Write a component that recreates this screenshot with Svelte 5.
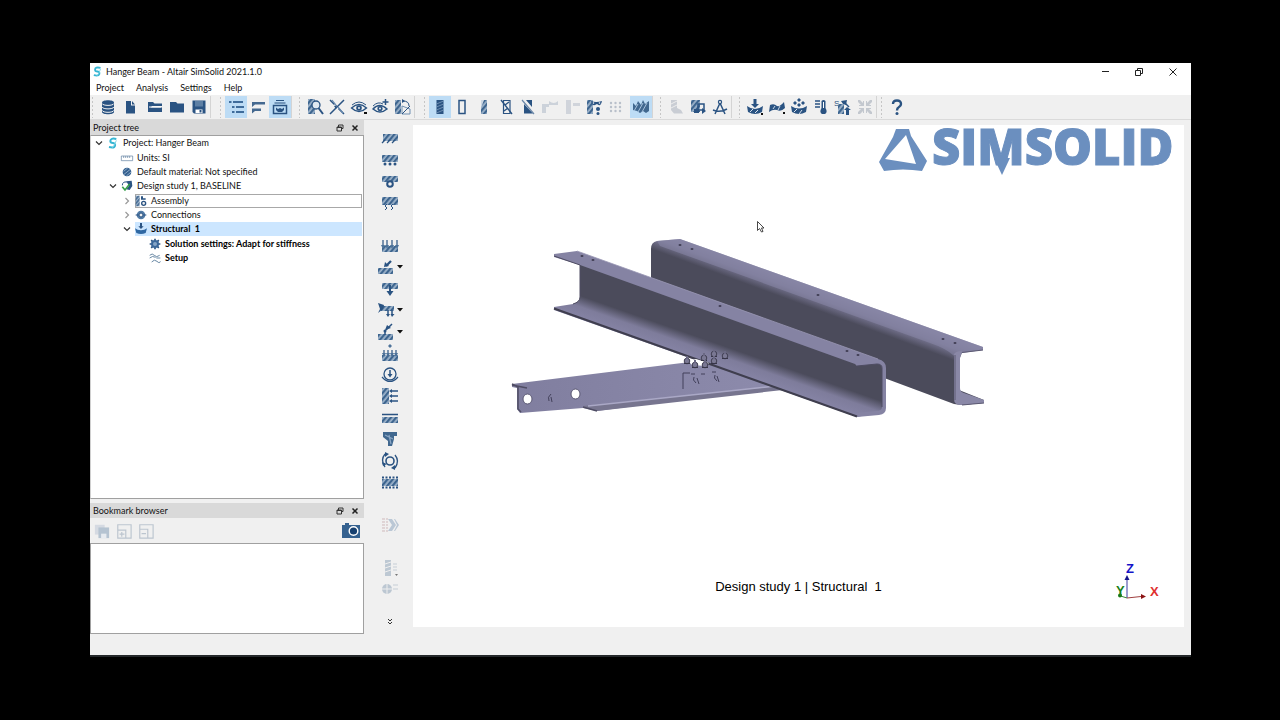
<script>
  const D = '#2a5382';
  const hatch = (x, y, w, h) => `<rect x="${x}" y="${y}" width="${w}" height="${h}" fill="url(#hatch)"/>`;
  const line = (d, w = 1.5, c = D) => `<path d="${d}" fill="none" stroke="${c}" stroke-width="${w}"/>`;
  const fill = (d, c = D) => `<path d="${d}" fill="${c}"/>`;
  const dot = (x, y, r, c = D) => `<circle cx="${x}" cy="${y}" r="${r}" fill="${c}"/>`;
  const ring = (x, y, r, w = 1.5) => `<circle cx="${x}" cy="${y}" r="${r}" fill="#f0f0f0" stroke="${D}" stroke-width="${w}"/>`;

  // Glyphs on an 18 x 18 grid
  const glyphs = {
    database: fill('M3 4.5C3 1.5 15 1.5 15 4.5V14C15 17 3 17 3 14Z') + line('M3 5.5C4 8 14 8 15 5.5M3 9C4 11.500 14 11.500 15 9M3 12.300C4 15 14 15 15 12.300', 1, '#f0f0f0'),
    file: fill('M5 3H10V7.500H14V15.500H5ZM11 3L14 6.500H11Z'),
    open: fill('M2 4H7L8.500 5.500H16V8H6L2 13Z') + fill('M2 14V9.500H16V14Z') + line('M3 9H15', 1, '#fff'),
    folder: fill('M2 4H8L9.500 5.500H16V14.500H2Z'),
    save: fill('M2.500 2.500H15.500V15.500H4L2.500 14Z') + fill('M5 3H13V8.500H5Z', '#5d7fa4') + fill('M5.500 11.500H12.500V15H5.500Z', '#fff') + fill('M9.500 12H11.500V14.500H9.500Z'),
    list: fill('M2 3H4.500V5H2ZM6 3H16V5H6ZM5 8H7.500V10H5ZM9 8H17V10H9ZM5 13H7.500V15H5ZM9 13H17V15H9Z', '#3f6c9b'),
    rows: fill('M3 4H16V6.500H6L3 9ZM3 10.500H12V13H6L3 15.500Z', '#44688f'),
    archive: line('M5 2.500H13M3.500 5H14.500', 1.200) + line('M2.500 7.500H15.500V15.500H2.500Z', 1.500) + fill('M5 9.500L7 11L9 10L11 11L13 9.500V12L11 14H7L5 12Z'),
    inspect: hatch(2, 1, 7, 15) + `<circle cx="10" cy="7" r="4" fill="#dfe8f1" stroke="${D}" stroke-width="1.300"/>` + line('M12.500 10L17 16', 2),
    explode: line('M2 16L16 2M2 2L6.500 6.500M10.500 10.500L16 16', 1.500) + line('M4 2L8 7M10 9L15 15', 1.200, '#6688ad') + fill('M6 8L9 7L8 11Z'),
    eye: line('M1.500 10Q9 3 16.500 10Q9 17 1.500 10Z', 1.400) + line('M2 7Q9 1 16 7', 1) + dot(9, 10, 2.800) + dot(9, 10, .9, '#fff') + fill('M14 14H17V16H14Z', '#111'),
    eyePlus: line('M1 11Q7.500 4 15 11Q8 17 1 11Z', 1.400) + line('M1 8Q6 3 11 6', 1) + dot(8, 10.500, 2.600) + dot(8, 10.500, .9, '#fff') + line('M13.500 1V7M10.500 4H16.500', 1.500),
    transform: hatch(1, 2, 6, 14) + line('M8 8L16 11V16H8Z', 1, '#6f8fb1') + line('M8 16L16 8M9 3Q15 3 15 8', 1) + fill('M8 1L11 3L8 5Z'),
    solid: `<rect x="5.500" y="2" width="7" height="14" fill="${D}"/>` + line('M5.500 6L12.500 3M5.500 9L12.500 6M5.500 12L12.500 9M5.500 15L12.500 12', .8, '#7f9dbe'),
    outline: line('M6 2.500H12V15.500H6Z', 1.500),
    partial: hatch(6, 2, 6, 14) + fill('M6 2H9L6 10Z', '#cdd8e4'),
    crossed: line('M6.500 2.500H13V15.500H6.500Z', 1.200) + line('M4 2L15 16M8 7L12 4M7 13L11 10', 1.400),
    halfCut: fill('M5 6L14 15.500H5ZM7 2H13V9Z') + line('M3 2L15 16', 1.200, '#6b87a8'),
    ghostA: fill('M1 6H8V9H5V15H1ZM8 3Q13 7 17 3V7H8Z', '#ccd2da'),
    ghostB: fill('M3 2H8V16H3ZM10 5H17V8H10Z', '#d0d4db'),
    mask: hatch(2, 2, 6, 14) + fill('M6 3Q11 5 17 3Q16 8 13.500 7L12 6L10 7Q7 8 6 3Z') + dot(13, 11, 2) + dot(13, 15.500, 1.500) + dot(8.500, 5, .8, '#fff') + dot(14.500, 5, .8, '#fff'),
    grid: [4, 8.500, 13].map((x) => [5, 9, 13].map((y) => dot(x, y, 1.200, '#b9c0ca')).join('')).join(''),
    wave: fill('M1 5L4 8L6 3L9 7L11 2L13 6L17 3V13L14 15L11 13L8 15L5 13L1 12Z', '#41688f') + line('M2 13L6 6M6 14L11 5M10 14L15 5', 1, '#a8c2dd'),
    ghostC: fill('M4 2H10V10L14 12L16 15.500H7L4 12Z', '#c9cdd4') + line('M4 6L10 3M4 10L10 7', 1, '#eee'),
    callout: hatch(2, 2, 9, 12) + line('M9 6H15V12H9Z', 1.500) + fill('M13 10L17 13L13 16Z') + fill('M5 11H10V15H5Z'),
    compass: line('M9 5L4 16M9 5L14 16M2 12Q9 15 16 11', 1.500) + ring(9, 4, 1.600, 1.200),
    loadDown: fill('M7.500 1H10.500V6H13L9 10L5 6H7.500Z') + fill('M1 8Q5 11 9 11Q13 11 17 8L16 14Q9 18 2 14Z') + line('M4 14L7 11M9 15L12 12', 1, '#d8e2ed') + fill('M15 15H17V17H15Z', '#111'),
    curve: fill('M1 14L2 7Q6 5 9 8Q12 9 16 4L17 10Q13 14 9 12Q5 11 1 14Z') + line('M5 11L7 8M10 12L12 8', 1, '#ccd9e6') + fill('M15 14H17V16H15Z', '#111'),
    thermal: fill('M9 0L11 2L9 4L7 2ZM5 3L7 5L5 7L3 5ZM13 3L15 5L13 7L11 5ZM9 5L11 7L9 9L7 7Z') + fill('M1 8Q9 13 17 8L16 14Q9 18 2 14Z') + line('M4 14L7 11M9 16L12 12', 1, '#d8e2ed'),
    thermometer: fill('M9.500 3Q11.500 1 13.500 3V10Q16 14 13 16H10Q7 14 9.500 10Z') + line('M3 3H8M3 6H8M3 9H8', 1.300) + line('M11.500 4V10', 1, '#fff'),
    dynamics: `<text x="0" y="8" font-size="8" font-family="Liberation Sans, sans-serif" fill="${D}">S</text>` + hatch(4, 6, 6, 10) + fill('M7 3L13 2L12 7L9 6ZM13 9L17 12H15V17H12V12H10Z') + line('M11 5L15 9', 1.500),
    collapse: fill('M2 2L4 2L7 5V3H8V8H3V7H5L2 4ZM16 2V4L13 7H15V8H10V3H11V5L14 2ZM2 16V14L5 11H3V10H8V15H7V13L4 16ZM16 16H14L11 13V15H10V10H15V11H13L16 14Z', '#c3c8cf'),
    help: line('M5 6Q5 2.500 9 2.500Q13 2.500 13 6Q13 8 11 9Q9 10 9 12.500', 2.400) + dot(9, 15.500, 1.500),

    fixed: hatch(2, 4, 15, 7) + line('M1 13L4 10M6 13L9 10M11 13L14 10', 1.300),
    slider: hatch(1, 4, 16, 7) + dot(4, 13, 1.500) + dot(9, 13, 1.500) + dot(14, 13, 1.500),
    hinge: hatch(1, 3, 16, 6) + ring(9, 11, 2.800, 2),
    spring: hatch(1, 3, 16, 8) + line('M6 10L4 12L6 14L4 16M12 10L10 12L12 14L10 16', 1),
    pressure: hatch(1, 9, 16, 6) + line('M2 3V10M6 3V10M11 3V10M16 3V10', 1.200) + fill('M0 8H4L2 12ZM4 8H8L6 12ZM9 8H13L11 12ZM14 8H18L16 12Z', '#4d7299'),
    force: hatch(1, 10, 15, 6) + line('M14 3L9 8', 2.300) + fill('M7 9L8 4L12 8Z'),
    gravity: hatch(1, 3, 16, 6) + line('M9 5V12', 2) + fill('M5.500 11H12.500L9 16Z'),
    bearing: hatch(4, 5, 13, 5) + fill('M1 2L7 4L6 8L1 12L3 8Z') + line('M11 9V14M15 9V14', 1.500) + fill('M9 13H13L11 16ZM13.500 13H17.500L15 16Z'),
    remote: hatch(1, 11, 15, 6) + line('M15 1L9 7M8 7V12', 1.500) + fill('M8 7L10 2L14 5Z') + dot(8, 8, 1.500),
    thermalLoad: hatch(1, 11, 16, 6) + line('M3 6V12M7 6V12M11 6V12M15 6V12', 1.200) + fill('M9 0L11 2L9 4L7 2ZM1 9H5L3 13ZM5 9H9L7 13ZM9 9H13L11 13ZM13 9H17L15 13Z', '#4d7299'),
    inertia: ring(9, 8, 6, 1.300) + line('M1 11Q9 20 17 11', 1.200) + line('M9 4V9', 1.500) + fill('M6.500 8H11.500L9 11.500Z'),
    hydro: hatch(1, 1, 7, 16) + line('M10 4H17M10 9H17M10 14H17', 1.500) + fill('M8 4L11 2V6ZM8 9L11 7V11ZM8 14L11 12V16Z'),
    surface: hatch(1, 8, 16, 6) + line('M1 5.500H17', 1.500),
    bolt: fill('M2 2H16V6H13V9L11 16H7V11L2 7Z', '#41688f') + line('M4 5L12 9M8 5L10 14', 1.200, '#8ba7c5'),
    rotate: ring(9, 9, 4, 1.600) + line('M4 2Q-1 8 4 15M14 3Q19 9 14 16', 1.300) + fill('M4 0L8 2L4 5ZM14 13L10 16L14 18ZM1 10L6 12L2 14Z'),
    strip: hatch(1, 6, 16, 7) + `<path d="M1 4.500H17M1 14.500H17" stroke="#2a5382" stroke-width="2" stroke-dasharray="2 1.500"/>`,
    stream: fill('M7 3H11L15 9L11 15H7L11 9ZM13 3H14L18 9L14 15H13L16 9Z', '#bac7d5') + `<path d="M1 3H7M1 6H7M1 9H7M1 12H7M1 15H7" stroke="#cfb9bb" stroke-dasharray="3 1"/>`,
    legendBar: fill('M4 1H10V17H4Z', '#bdc8d3') + line('M4 5L10 3M4 9L10 7M4 13L10 11', 1, '#eee') + line('M12 5H16M12 8H16M12 11H16', 1.200, '#c5cdd6') + fill('M14 15H17L15.500 17Z', '#777'),
    legendGlobe: `<circle cx="6" cy="9" r="5" fill="#bcc7d2"/>` + line('M6 4V14M1 9H11', 1, '#eee') + line('M12 5H17M12 9H17', 1.200, '#c5cdd6'),

    brand: line('M14 3Q5 1 5 6Q5 9 9 9Q13 10 12 13Q11 17 3 15', 3, '#35b5d3') + line('M14 5Q12 12 8 16', 1.500, '#87d8e8'),
    ruler: `<path d="M.5 6H17.500V13H.5Z" fill="#fff" stroke="#5c7c9e"/>` + line('M4 6V9M7 6V9M10 6V9M13 6V9', 1, '#5c7c9e'),
    material: dot(9, 9, 6.500, '#34608f') + line('M4 8L10 3M4 13L14 5M8 15L15 9', 1.200, '#a5bdd6'),
    study: fill('M8 2L16 1L17 9L13 15L8 14L12 9Z') + line('M9 3Q2 2 2 8', 1.500) + line('M2 10L6 15L13 6', 2.500, '#35a04a'),
    parts: hatch(1, 1, 6, 16) + fill('M9 2H12V5H16V7H9Z') + ring(13, 12.500, 3, 2),
    connection: dot(9, 9, 6.500, '#527ba6') + ring(9, 9, 3) + line('M1 9H5M13 9H17', 1.500),
    structural: fill('M7.500 0H10.500V5H13L9 9L5 5H7.500Z') + fill('M0 8L4 10L9 11L14 10L18 8L16 15Q9 18 2 15Z', '#2f68a3'),
    gear: `<path d="M9 1V17M1 9H17M3.300 3.300L14.700 14.700M14.700 3.300L3.300 14.700" stroke="#2a5382" stroke-width="2.500"/>` + dot(9, 9, 6, '#3c689a') + dot(9, 9, 3, '#86a5c6'),
    setup: line('M1 5Q5 1 8 5T16 5M1 9Q5 5 10 8M4 15Q8 10 12 14T17 14M11 9H17', 1.300, '#527697'),
    copies: fill('M1 2H12V13H1Z', '#d5dae2') + fill('M5 5H17V17H5Z', '#b5c3d1') + fill('M8 12H14V17H8Z', '#e7ebf0'),
    expand: line('M2 2H17V17H2ZM2 8H11V17M6.500 10V15.500M4 12.500H9.500', 1.300, '#bcc5cf'),
    shrink: line('M2 2H17V17H2ZM2 7H11V17M4 12H9', 1.300, '#bcc5cf'),
    camera: fill('M0 3H3V1H7V3H18V16H0Z', '#35618f') + `<circle cx="11.500" cy="9" r="4.300" fill="#17406f" stroke="#fff" stroke-width="1.400"/>`
  };

  const groups = [
    { items: [['database', 'Database'], ['file', 'New project'], ['open', 'Open project'], ['folder', 'Close project'], ['save', 'Save project']], gapAt: 2 },
    { items: [['list', 'Project tree', 1], ['rows', 'Comments'], ['archive', 'Bookmark browser', 1]], tight: true },
    { items: [['inspect', 'Inspect'], ['explode', 'Explode'], ['eye', 'Show'], ['eyePlus', 'Show more'], ['transform', 'Transform']] },
    { items: [['solid', 'Solid', 1], ['outline', 'Outline'], ['partial', 'Transparent'], ['crossed', 'Hide'], ['halfCut', 'Clip'], ['ghostA', 'Mask'], ['ghostB', 'Unmask'], ['mask', 'Mask settings'], ['grid', 'Points'], ['wave', 'Loads and constraints', 1]], gapAt: 9, tight: true },
    { items: [['ghostC', 'Results'], ['callout', 'Pick info'], ['compass', 'Measure']], tight: true },
    { items: [['loadDown', 'Structural'], ['curve', 'Modal'], ['thermal', 'Thermal'], ['thermometer', 'Temperature'], ['dynamics', 'Dynamics'], ['collapse', 'Fit']], tight: true },
    { items: [['help', 'Help']], last: true }
  ];

  const side = [
    ['fixed', 'Immovable'], ['slider', 'Slider'], ['hinge', 'Hinge'], ['spring', 'Spring'], null,
    ['pressure', 'Pressure'], ['force', 'Force', 1], ['gravity', 'Gravity'], ['bearing', 'Bearing load', 1], ['remote', 'Remote load', 1],
    ['thermalLoad', 'Thermal load'], ['inertia', 'Inertia load'], ['hydro', 'Hydrostatic pressure'], ['surface', 'Surface load'], ['bolt', 'Bolt tightening'],
    ['rotate', 'Angular velocity'], ['strip', 'Distributed mass'], null, ['stream', 'Solve'], null, ['legendBar', 'Results plot'], ['legendGlobe', 'Reactions']
  ];

  const tree = [{ icon: 'brand', label: 'Project: Hanger Beam', open: true, children: [
    { icon: 'ruler', label: 'Units: SI' },
    { icon: 'material', label: 'Default material: Not specified' },
    { icon: 'study', label: 'Design study 1, BASELINE', open: true, children: [
      { icon: 'parts', label: 'Assembly', open: false, focus: true },
      { icon: 'connection', label: 'Connections', open: false },
      { icon: 'structural', label: 'Structural  1', open: true, selected: true, bold: true, children: [
        { icon: 'gear', label: 'Solution settings: Adapt for stiffness', bold: true },
        { icon: 'setup', label: 'Setup', bold: true }
      ] }
    ] }
  ] }];

  const bolts = [[687, 361], [695, 365], [704, 358], [705, 365], [714, 354], [714, 361], [725, 356]];
  const holes = [[582, 256], [593, 260], [720, 306], [847, 351], [858, 355], [680, 245], [692, 249], [818, 295], [943, 339], [955, 343]];
</script>

{#snippet icon(name)}
  <svg class="icon" viewBox="0 0 18 18" aria-hidden="true">{@html glyphs[name]}</svg>
{/snippet}

{#snippet branch(nodes)}
  <ul>
    {#each nodes as n}
      <li>
        <div class="row">
          {#if n.open !== undefined}
            <button class="twisty" aria-label={(n.open ? 'Collapse ' : 'Expand ') + n.label}>
              <svg viewBox="0 0 8 8" aria-hidden="true"><path d={n.open ? 'M1 2.500L4 5.500L7 2.500' : 'M2.500 1L5.500 4L2.500 7'} fill="none" stroke={n.open ? '#333' : '#999'} stroke-width="1.200" /></svg>
            </button>
          {:else}
            <span class="twisty"></span>
          {/if}
          <button class="node" class:bold={n.bold} class:selected={n.selected} class:focus={n.focus}>{@render icon(n.icon)}<span>{n.label}</span></button>
        </div>
        {#if n.children}{@render branch(n.children)}{/if}
      </li>
    {/each}
  </ul>
{/snippet}

{#snippet dockTitle(text)}
  <header class="dock-title">
    <h2>{text}</h2>
    <button aria-label="Float {text}"><svg viewBox="0 0 8 8"><path d="M2.500 3V1H7V4.500H5.500M1 3H5.500V7H1ZM1 3.500H5.500" fill="none" stroke="#333" /></svg></button>
    <button aria-label="Close {text}"><svg viewBox="0 0 8 8"><path d="M1.500 1.500L6.500 6.500M6.500 1.500L1.500 6.500" stroke="#222" stroke-width="1.500" /></svg></button>
  </header>
{/snippet}

<svg class="defs" aria-hidden="true">
  <defs>
    <pattern id="hatch" width="4" height="4" patternUnits="userSpaceOnUse" patternTransform="rotate(40)">
      <rect width="4" height="4" fill="#9db3ca" /><rect width="2.200" height="4" fill="#3d658f" />
    </pattern>
  </defs>
</svg>

<div class="screen">
  <div class="window">
    <header class="titlebar">
      {@render icon('brand')}
      <h1>Hanger Beam - Altair SimSolid 2021.1.0</h1>
      <button aria-label="Minimize"><svg viewBox="0 0 10 10"><path d="M2 4.500H9" stroke="#222" /></svg></button>
      <button aria-label="Restore"><svg viewBox="0 0 10 10"><path d="M3.500 3V1.500H8.500V6.500H7M1.500 3.500H6.500V8.500H1.500Z" fill="none" stroke="#222" /></svg></button>
      <button aria-label="Close"><svg viewBox="0 0 10 10"><path d="M1.500 1.500L8.500 8.500M8.500 1.500L1.500 8.500" stroke="#222" /></svg></button>
    </header>
    <nav class="menu">
      {#each ['Project', 'Analysis', 'Settings', 'Help'] as m}<button>{m}</button>{/each}
    </nav>
    <div class="toolbar" role="toolbar" aria-label="Main">
      {#each groups as g, i}
        <div class="group" class:tight={g.tight} class:first={i === 0} class:last={g.last}>
          {#each g.items as [name, label, on], j}
            <button class="tool" class:on class:spaced={g.gapAt === j} aria-label={label}>{@render icon(name)}</button>
          {/each}
        </div>
      {/each}
    </div>

    <div class="main">
      <aside class="docks">
        <section class="dock tree-dock">
          {@render dockTitle('Project tree')}
          <div class="tree">{@render branch(tree)}</div>
        </section>
        <section class="dock">
          {@render dockTitle('Bookmark browser')}
          <div class="bookmark-tools">
            <button aria-label="Update bookmark">{@render icon('copies')}</button>
            <button aria-label="Expand all">{@render icon('expand')}</button>
            <button aria-label="Collapse all">{@render icon('shrink')}</button>
            <button class="camera" aria-label="Add bookmark">{@render icon('camera')}</button>
          </div>
          <div class="bookmarks"></div>
        </section>
      </aside>

      <div class="sidebar" role="toolbar" aria-label="Analysis">
        <div class="slots">
          {#each side as s}
            {#if s}
              <button class="slot" aria-label={s[1]}>
                {@render icon(s[0])}
                {#if s[2]}<svg class="drop" viewBox="0 0 6 4" aria-hidden="true"><path d="M0 0H6L3 3.500Z" fill="#111" /></svg>{/if}
              </button>
            {:else}<span></span>{/if}
          {/each}
        </div>
        <button class="more" aria-label="More tools"><svg viewBox="0 0 6 8"><path d="M1 1L3 3L5 1M1 4L3 6L5 4" fill="none" stroke="#333" /></svg></button>
      </div>

      <main class="view">
        <svg class="model" viewBox="413 125 771 502" role="img" aria-label="Hanger beam assembly">
          <defs>
            <linearGradient id="back" gradientUnits="userSpaceOnUse" x1="740" y1="260" x2="733" y2="279">
              <stop offset="0" stop-color="#8886a6" /><stop offset=".45" stop-color="#7b7997" /><stop offset="1" stop-color="#4b4b5b" />
            </linearGradient>
            <linearGradient id="web" gradientUnits="userSpaceOnUse" x1="740" y1="374" x2="747" y2="354">
              <stop offset="0" stop-color="#8583a4" /><stop offset=".5" stop-color="#7e7c9b" /><stop offset="1" stop-color="#4b4b5b" />
            </linearGradient>
            <linearGradient id="plate" x1="0" x2="1"><stop stop-color="#807e9f" /><stop offset="1" stop-color="#8d8bac" /></linearGradient>
          </defs>

          <path d="M651 249Q651 242 657 241L680 239L983 347V350L962 353L959 360V390L984 400V403L961 405L954 404L651 291Z" fill="url(#back)" />
          <path d="M680 239L983 347V350L962 352Q957 353 957 358L953 355Q945 348 930 343L660 246L657 241Z" fill="#8785a5" opacity=".6" />
          <path d="M954 354Q956 351 962 351L960 358V388Q960 392 964 393L984 400V403L961 405Q954 405 954 399Z" fill="#8a88a7" />
          <path d="M955 355V400M962 352.500L983 350M962 405L984 403" fill="none" stroke="#5c5a73" />

          <path d="M512 384L690 362L720 366L781 387L597 411L583 408L520 413L517 409V388L512 387Z" fill="url(#plate)" />
          <path d="M583 406L781 386L783 390L597 411Z" fill="#77758f" />
          <path d="M588 406L780 385.500" fill="none" stroke="#aaa8c6" stroke-width="1.500" />
          <path d="M512 384L518 387V409L521 412M512 385L527 388M583 407L597 411" fill="none" stroke="#4f4d64" stroke-width="1.500" />
          <path d="M683 389V373H690" fill="none" stroke="#42405a" />
          <path d="M551 394Q547 397 549 401M551 397L552 402M691 374H695M701 374H705M712 372H716M694 377Q692 380 696 383M697 378L699 384M715 375Q713 378 717 381M717 376L719 382" fill="none" stroke="#42405a" />
          <ellipse cx="527.500" cy="399" rx="4.500" ry="5" fill="#fff" stroke="#5b5974" />
          <ellipse cx="575.500" cy="394" rx="4.500" ry="5" fill="#fff" stroke="#5b5974" />

          <path d="M580 263L857 363L882 361L884 411L857 417L554 310V307L573 304Q580 302 580 297Z" fill="url(#web)" />
          <path d="M554 254L577 251L878 359Q886 361 886 368V408Q886 414 879 415L857 417L855 413L876 411Q882 411 882 407V369Q882 364 877 364L857 366L855 364L580 265L554 257Z" fill="#8583a3" />
          <path d="M554 256L580 265V297Q580 302 573 304M857 366L877 364Q882 364 882 368V407" fill="none" stroke="#4e4c62" stroke-width="1" />
          <path d="M554 308.500L857 416.500" fill="none" stroke="#3f3e4e" stroke-width="2" />
          <path d="M577 251L878 359" fill="none" stroke="#9a98b5" stroke-width=".8" />

          <path d="M688 361L696 359L709 363L705 366L692 365Z" fill="#fff" />
          {#each bolts as [x, y]}
            <g transform="translate({x} {y})"><circle r="2.800" fill="#7a7893" stroke="#403e52" /><path d="M-3 2.500H3" stroke="#373548" /><path d="M0 -5V-2" stroke="#6a6883" stroke-width="2" /></g>
          {/each}
          {#each holes as [x, y]}<ellipse cx={x} cy={y} rx="1.500" ry="1.100" fill="#3f3d52" />{/each}
          <path d="M757.500 221.500V230.500L759.500 228.500L761.500 232L763 231.500L761.500 228H764Z" fill="#fff" stroke="#333" stroke-width=".9" />
        </svg>

        <svg class="logo" viewBox="0 0 300 48" role="img" aria-label="SimSolid">
          <path fill="#6b8fbf" fill-rule="evenodd" d="M18 1H31L33 8L49 33L44 43Q25 40 6 43L1 34L15 9ZM28 7L7 31L38 36Z" />
          <text x="54" y="37" font-family="Open Sans, sans-serif" font-weight="800" font-size="49" fill="#6b8fbf" stroke="#6b8fbf" stroke-width="1">SIMSOLID</text>
          <path d="M116 30H132L124 47Z" fill="#6b8fbf" />
        </svg>

        <p class="caption">Design study 1 | Structural  1</p>

        <svg class="triad" viewBox="0 0 50 44" role="img" aria-label="Axes">
          <path d="M14 37V18" stroke="#3a3aa0" /><path d="M11.500 19L14 14L16.500 19Z" fill="#14148c" />
          <path d="M14 37L28 35.500" stroke="#a04040" /><path d="M28 33L33 35.500L28 38Z" fill="#8c1414" />
          <path d="M14 37L6 34.500" stroke="#3a8a3a" /><circle cx="7" cy="34.500" r="2" fill="#187818" />
          <text x="13" y="12" fill="#1414c8">Z</text><text x="3" y="34" fill="#188018">Y</text><text x="37" y="35" fill="#e03030">X</text>
        </svg>
      </main>
    </div>
    <footer class="status"></footer>
  </div>
</div>

<style>
  :global(body) { margin: 0; background: #000; }
  * { box-sizing: border-box; }
  button { margin: 0; padding: 0; border: 0; background: none; font: inherit; color: inherit; }
  h1, h2, p { margin: 0; font-size: inherit; font-weight: 400; }
  svg { display: block; flex: none; overflow: visible; }
  .defs { position: absolute; width: 0; height: 0; }
  .icon { width: 18px; height: 18px; }

  .screen { display: flex; min-height: 100vh; padding: 63px 89px 63px 90px; background: #000; }
  .window { flex: 1; min-width: 0; display: flex; flex-direction: column; background: #f0f0f0; color: #111; font: 9px/14px Lato, "Noto Sans", sans-serif; border-bottom: 2px solid #24282a; }

  .titlebar { display: flex; align-items: center; height: 17px; padding-left: 2px; background: #fff; }
  .titlebar > .icon { width: 11px; height: 11px; margin-right: 3px; }
  .titlebar h1 { flex: 1; }
  .titlebar button { display: grid; place-items: center; width: 34px; height: 17px; }
  .titlebar button:last-child { margin-right: 1px; }
  .titlebar button svg { width: 10px; height: 10px; }

  .menu { display: flex; gap: 12px; height: 15px; padding-left: 6px; background: #fff; }

  .toolbar { display: flex; align-items: center; height: 25px; border-bottom: 1px solid #dadada; }
  .group { display: flex; padding-left: 10px; margin-right: 4px; border-right: 1px solid #d4d4d4; background: radial-gradient(circle, #c6c6c6 1px, transparent 1px) 4px 0 / 3px 4px repeat-y; }
  .group.first { padding-left: 7px; background-position-x: 1px; }
  .group.tight { margin-right: 2px; }
  .group.last { padding-left: 7px; border: 0; background-position-x: 1px; }
  .tool { display: grid; place-items: center; width: 22px; height: 22px; }
  .tool.spaced { margin-left: 3px; }
  .tool.on { background: #bddcf5; }

  .main { flex: 1; min-height: 0; display: grid; grid-template-columns: 274px 48px minmax(0, 1fr); }
  .docks { display: flex; flex-direction: column; gap: 4px; }
  .dock { display: flex; flex-direction: column; }
  .tree-dock { flex: 1; }
  .dock-title { display: flex; align-items: center; height: 15px; padding-left: 3px; background: #d9d9d9; }
  .dock-title h2 { flex: 1; }
  .dock-title button { display: grid; place-items: center; width: 15px; height: 15px; }
  .dock-title button:last-child { margin-right: 2px; }
  .dock-title svg { width: 8px; height: 8px; }
  .tree { flex: 1; padding-right: 1px; background: #fff; border: 1px solid #a0a0a0; border-left-color: #d0d0d0; }
  .tree ul { margin: 0; padding: 0; list-style: none; }
  .tree ul ul { padding: 1px 0 0 14px; }
  .row { display: flex; height: 14px; }
  .twisty { flex: none; display: grid; place-items: center; width: 16px; }
  .twisty svg { width: 8px; height: 8px; }
  .node { flex: 1; display: flex; align-items: center; gap: 4px; height: 14px; line-height: 14px; white-space: pre; text-align: left; }
  .node .icon { width: 12px; height: 12px; }
  .node.bold { font-weight: 700; color: #000; }
  .node.selected { background: #cce6ff; }
  .node.focus { box-shadow: inset 0 0 0 1px #a8a8a8; }

  .bookmark-tools { display: flex; align-items: center; gap: 6px; height: 25px; padding: 0 4px; }
  .bookmark-tools .icon { width: 16px; height: 16px; }
  .bookmark-tools .camera { margin-left: auto; }
  .bookmark-tools .camera .icon { width: 18px; height: 18px; }
  .bookmarks { height: 91px; background: #fff; border: 1px solid #a0a0a0; }

  .sidebar { display: flex; flex-direction: column; padding: 8px 0 6px 4px; }
  .slots { flex: 1; display: grid; grid-auto-rows: 1fr; }
  .slot { display: flex; align-items: center; justify-content: center; gap: 2px; }
  .drop { width: 6px; height: 4px; }
  .more { display: grid; place-items: center; height: 28px; padding-top: 16px; }
  .more svg { width: 6px; height: 8px; }

  .view { position: relative; margin: 5px 7px 7px 1px; background: #fff; }
  .model { width: 100%; height: 100%; }
  .logo { position: absolute; top: 3px; right: 6px; width: 300px; height: 48px; }
  .caption { position: absolute; left: 0; right: 0; bottom: 31px; text-align: center; font: 13px/18px "Liberation Sans", Arial, sans-serif; white-space: pre; color: #000; }
  .triad { position: absolute; right: 21px; bottom: 22px; width: 50px; height: 44px; font: bold 13px "Liberation Sans", Arial, sans-serif; }
  .status { height: 21px; }
</style>
